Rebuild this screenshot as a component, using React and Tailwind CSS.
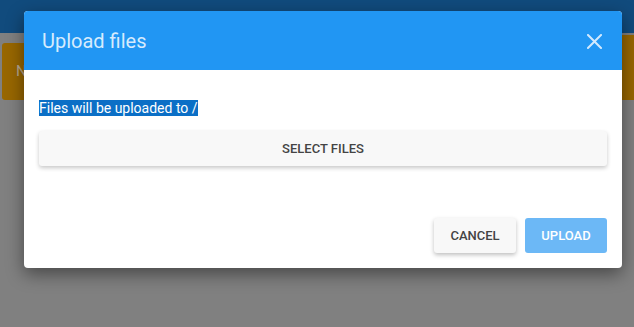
import React from "react";

const CloseIcon = () => (
  <svg width="15" height="15" viewBox="0 0 15 15" className="text-[#d2e9fd]">
    <path d="M1 1L14 14M14 1L1 14" stroke="currentColor" strokeWidth="2" strokeLinecap="square" />
  </svg>
);

const UploadDialog = () => {
  return (
    <div className="absolute left-[24px] top-[11px] w-[598px] bg-white rounded-[4px] shadow-[0_6px_18px_rgba(0,0,0,0.45)] overflow-hidden">
      <div className="h-[59px] bg-[#2196f3] flex items-center justify-between pl-[18px] pr-[20px] pt-[2px]">
        <div className="text-[20px] text-[#d6ebfd] leading-none pb-[2px]">Upload files</div>
        <CloseIcon />
      </div>

      <div className="px-[15px] pt-[30px] pb-[15px]">
        <div className="text-[14px] leading-[17px] h-[17px]">
          <span className="bg-[#0b6fc6] text-white">Files will be uploaded to /</span>
        </div>
        <button className="mt-[14px] w-full h-[35px] rounded-[3px] bg-[#f8f8f8] shadow-[0_2px_4px_rgba(0,0,0,0.22)] text-[13px] font-medium text-[#444] uppercase">
          Select files
        </button>

        <div className="mt-[52px] flex justify-end gap-[9px]">
          <button className="w-[82px] h-[35px] rounded-[3px] bg-[#f8f8f8] shadow-[0_2px_4px_rgba(0,0,0,0.25)] text-[13px] font-medium text-[#444] uppercase">
            Cancel
          </button>
          <button className="w-[82px] h-[35px] rounded-[3px] bg-[#6cb8f6] text-[13px] font-medium text-white uppercase">
            Upload
          </button>
        </div>
      </div>
    </div>
  );
};

export default function App() {
  return (
    <div className="relative w-[634px] h-[327px] overflow-hidden bg-[#808080] font-['Roboto',sans-serif]">
      {/* page behind the overlay, dimmed */}
      <div className="h-[33px] bg-[#114b7d]" />
      <div className="flex justify-between pt-[10px]">
        <div className="ml-[2px] w-[40px] h-[57px] rounded-[3px] bg-[#986700] flex items-center pl-[14px] text-[15px] text-[#b8a890]">
          N
        </div>
        <div className="-mt-[8px] w-[14px] h-[65px] bg-[#986700]" />
      </div>

      <UploadDialog />
    </div>
  );
}
